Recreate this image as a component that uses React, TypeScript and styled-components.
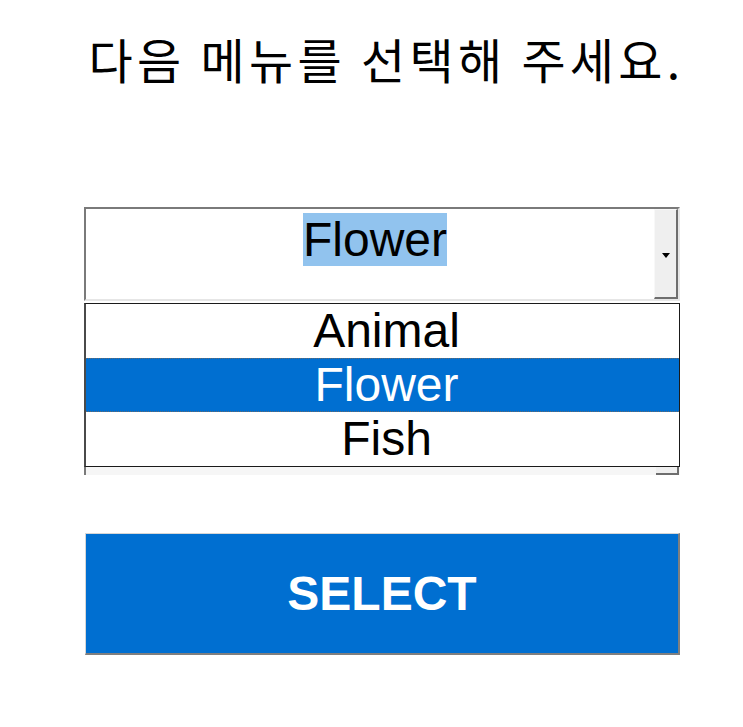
import React from "react";
import styled, { createGlobalStyle } from "styled-components";

const Global = createGlobalStyle`
  html, body { margin: 0; padding: 0; background: #ffffff; }
  body { font-family: "Liberation Sans", Arial, sans-serif; }
`;

const Page = styled.div`
  width: 596px;
  padding: 25px 0 0 84px;
  display: flex;
  flex-direction: column;
`;

const Title = styled.h1`
  margin: 0 -20px;
  padding-left: 9px;
  text-align: center;
  white-space: nowrap;
  font-family: "Noto Sans CJK KR", "Liberation Sans", sans-serif;
  font-weight: 400;
  font-size: 48px;
  line-height: 66px;
  letter-spacing: 4.3px;
  color: #000;
`;

const Field = styled.div`
  margin-top: 116px;
  height: 90px;
  display: flex;
  border-style: solid;
  border-width: 2px;
  border-color: #7a7a7a #e6e6e6 #e6e6e6 #7a7a7a;
  background: #fff;
`;

const FieldValue = styled.div`
  flex: 1;
  display: flex;
  justify-content: center;
  align-items: flex-start;
  padding-top: 4px;
  padding-left: 10px;
`;

const Highlight = styled.span`
  background: #91c3ee;
  color: #000;
  font-size: 48px;
  line-height: 53px;
`;

const DropButton = styled.div`
  width: 21px;
  display: flex;
  align-items: center;
  justify-content: center;
  background: #efefef;
  border-style: solid;
  border-width: 1px 2px 2px 1px;
  border-color: #f8f8f8 #6e6e6e #6e6e6e #f8f8f8;
`;

const Arrow = styled.span`
  width: 0;
  height: 0;
  margin-top: 4px;
  border-left: 4px solid transparent;
  border-right: 4px solid transparent;
  border-top: 5px solid #000;
`;

const List = styled.ul`
  list-style: none;
  margin: 2px 0 0;
  padding: 0;
  border: 1px solid #1a1a1a;
  border-left: 2px solid #4a4a4a;
  background: #fff;
`;

const Item = styled.li<{ $selected?: boolean }>`
  height: 54px;
  display: flex;
  align-items: center;
  justify-content: center;
  padding-left: 8px;
  font-size: 48px;
  line-height: 54px;
  color: ${(p) => (p.$selected ? "#ffffff" : "#000000")};
  background: ${(p) => (p.$selected ? "#006fd1" : "#ffffff")};
  box-sizing: border-box;
  border-top: 1px dotted ${(p) => (p.$selected ? "#6a6a6a" : "transparent")};
  border-bottom: 1px dotted ${(p) => (p.$selected ? "#6a6a6a" : "transparent")};
`;

const Strip = styled.div`
  height: 8px;
  display: flex;
  justify-content: flex-end;
  background: #f6f6f6;
  border-left: 2px solid #7a7a7a;
`;

const ScrollStub = styled.div`
  width: 21px;
  background: #efefef;
  border-right: 2px solid #6e6e6e;
  border-bottom: 2px solid #6e6e6e;
  margin-right: 1px;
`;

const SelectButton = styled.button`
  margin: 58px 0 0 1px;
  height: 122px;
  width: 595px;
  background: #006fd1;
  color: #fff;
  font-family: "Liberation Sans", Arial, sans-serif;
  font-weight: 700;
  font-size: 48px;
  border-style: solid;
  border-width: 1px 2px 2px 1px;
  border-color: #d6d6d6 #7f7f7f #7f7f7f #d6d6d6;
  padding: 0;
  cursor: pointer;
`;

export default function App() {
  return (
    <>
      <Global />
      <Page>
        <Title>다음 메뉴를 선택해 주세요.</Title>
        <Field>
          <FieldValue>
            <Highlight>Flower</Highlight>
          </FieldValue>
          <DropButton>
            <Arrow />
          </DropButton>
        </Field>
        <List>
          <Item>Animal</Item>
          <Item $selected>Flower</Item>
          <Item>Fish</Item>
        </List>
        <Strip>
          <ScrollStub />
        </Strip>
        <SelectButton>SELECT</SelectButton>
      </Page>
    </>
  );
}
